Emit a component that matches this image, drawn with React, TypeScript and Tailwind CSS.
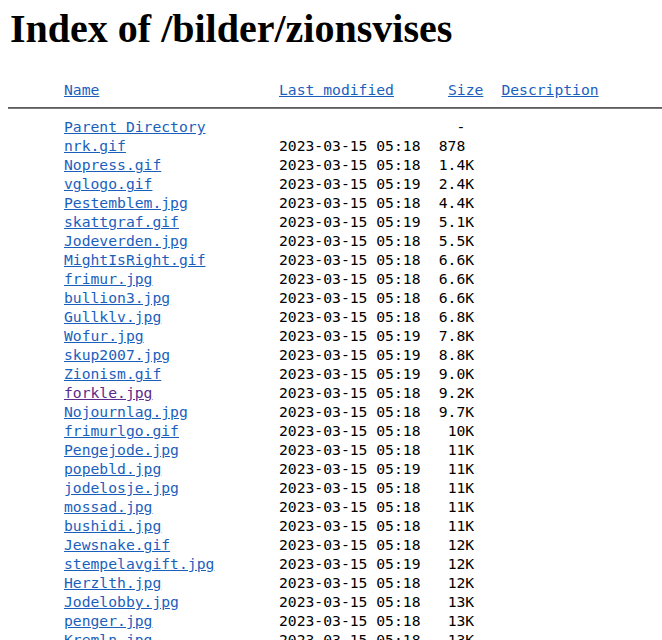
import React from 'react';

type Entry = { name: string; time: string; size: string; visited?: boolean };

const entries: Entry[] = [
  { name: 'nrk.gif', time: '05:18', size: '878  ' },
  { name: 'Nopress.gif', time: '05:18', size: '1.4K ' },
  { name: 'vglogo.gif', time: '05:19', size: '2.4K ' },
  { name: 'Pestemblem.jpg', time: '05:18', size: '4.4K ' },
  { name: 'skattgraf.gif', time: '05:19', size: '5.1K ' },
  { name: 'Jodeverden.jpg', time: '05:18', size: '5.5K ' },
  { name: 'MightIsRight.gif', time: '05:18', size: '6.6K ' },
  { name: 'frimur.jpg', time: '05:18', size: '6.6K ' },
  { name: 'bullion3.jpg', time: '05:18', size: '6.6K ' },
  { name: 'Gullklv.jpg', time: '05:18', size: '6.8K ' },
  { name: 'Wofur.jpg', time: '05:19', size: '7.8K ' },
  { name: 'skup2007.jpg', time: '05:19', size: '8.8K ' },
  { name: 'Zionism.gif', time: '05:19', size: '9.0K ' },
  { name: 'forkle.jpg', time: '05:18', size: '9.2K ', visited: true },
  { name: 'Nojournlag.jpg', time: '05:18', size: '9.7K ' },
  { name: 'frimurlgo.gif', time: '05:18', size: '10K ' },
  { name: 'Pengejode.jpg', time: '05:18', size: '11K ' },
  { name: 'popebld.jpg', time: '05:19', size: '11K ' },
  { name: 'jodelosje.jpg', time: '05:18', size: '11K ' },
  { name: 'mossad.jpg', time: '05:18', size: '11K ' },
  { name: 'bushidi.jpg', time: '05:18', size: '11K ' },
  { name: 'Jewsnake.gif', time: '05:18', size: '12K ' },
  { name: 'stempelavgift.jpg', time: '05:19', size: '12K ' },
  { name: 'Herzlth.jpg', time: '05:18', size: '12K ' },
  { name: 'Jodelobby.jpg', time: '05:18', size: '13K ' },
  { name: 'penger.jpg', time: '05:18', size: '13K ' },
  { name: 'Kremln.jpg', time: '05:18', size: '13K ' },
];

const link = 'text-[#1b5fbd] underline';

const Row: React.FC<{ e: Entry }> = ({ e }) => (
  <div className="flex h-[19px] leading-[19px] whitespace-pre">
    <a href="#" className={`w-[215px] ${e.visited ? 'text-[#5b2a8c] underline' : link}`}>
      {e.name}
    </a>
    <span className="w-[142px]">2023-03-15 {e.time}</span>
    <span className="w-[62px] text-right">{e.size}</span>
  </div>
);

export default function App() {
  return (
    <div className="bg-white text-black min-h-[640px] overflow-hidden">
      <h1
        className="m-0 ml-[10px] pt-[7px] text-[40px] leading-[44px] font-bold"
        style={{ fontFamily: '"Liberation Serif", "Times New Roman", serif' }}
      >
        Index of /bilder/zionsvises
      </h1>
      <div
        className="mt-[29px] text-[14.7px]"
        style={{ fontFamily: '"DejaVu Sans Mono", "Liberation Mono", monospace' }}
      >
        <div className="flex h-[19px] leading-[19px] whitespace-pre pl-[64px]">
          <a href="#" className={`w-[215px] ${link}`}>Name</a>
          <span className="w-[169px]">
            <a href="#" className={link}>Last modified</a>
          </span>
          <a href="#" className={link}>Size</a>
          <span className="w-[18px]" />
          <a href="#" className={link}>Description</a>
        </div>
        <div className="ml-[8px] mt-[8px] h-[2px] flex flex-col">
          <div className="h-px bg-[#5c5c5c]" />
          <div className="h-px bg-[#7a7a7a]" />
        </div>
        <div className="pl-[64px] pt-[8px]">
          <div className="flex h-[19px] leading-[19px] whitespace-pre">
            <a href="#" className={`w-[215px] ${link}`}>Parent Directory</a>
            <span className="w-[142px]" />
            <span className="w-[62px] text-right">{'-  '}</span>
          </div>
          {entries.map((e) => (
            <Row key={e.name} e={e} />
          ))}
        </div>
      </div>
    </div>
  );
}
